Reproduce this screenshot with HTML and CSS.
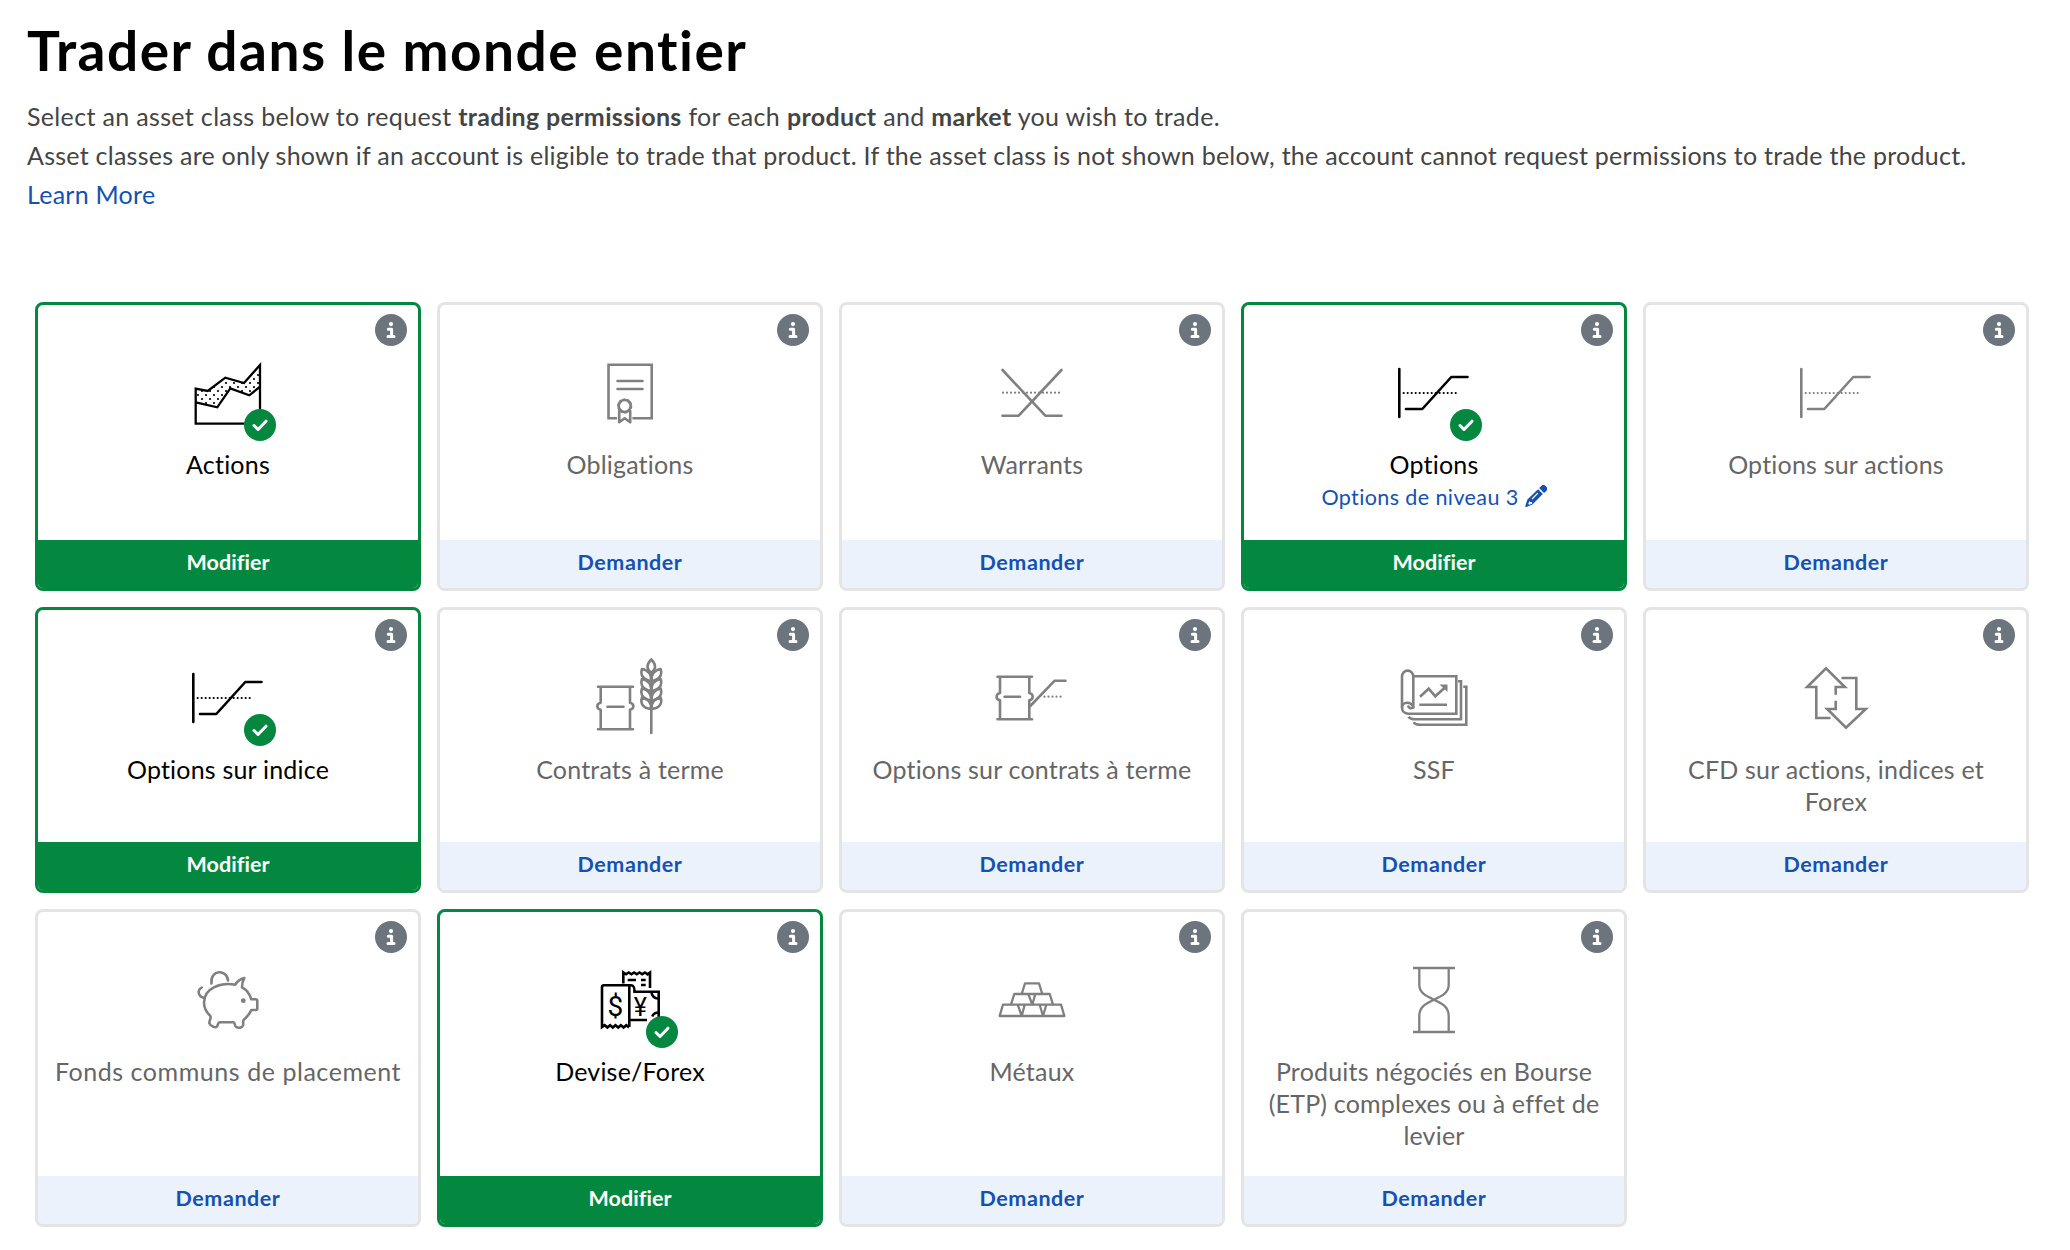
FILE: index.html
```
<!DOCTYPE html>
<html lang="fr">
<head>
  <meta charset="UTF-8">
  <title>Trader dans le monde entier</title>
  <link rel="stylesheet" href="styles.css">
</head>
<body>
  <!-- Icônes partagées -->
  <svg class="sprite" width="0" height="0">
    <symbol id="info" viewBox="0 0 32 32">
      <circle cx="16" cy="16" r="16" fill="#6c757d"/>
      <circle cx="16" cy="10.1" r="2.1" fill="#fff"/>
      <path d="M13.3 15.2h3.3v7.3M13 22.5h6" fill="none" stroke="#fff" stroke-width="3" stroke-linecap="round" stroke-linejoin="round"/>
    </symbol>
    <symbol id="check" viewBox="0 0 32 32">
      <circle cx="16" cy="16" r="16" fill="#04883f" stroke="none"/>
      <path d="M10 16.5l4 4 8-8.3" fill="none" stroke="#fff" stroke-width="3" stroke-linecap="round" stroke-linejoin="round"/>
    </symbol>
    <symbol id="pencil" viewBox="0 0 22 22">
      <path fill="currentColor" fill-rule="evenodd" d="M13 4.2L17.8 9 7.4 19.4 1.4 21.9Q0 22.3 .4 20.8L2.4 14.600zM4.300 16l-1 3 .8.8 3-1V17H5zM12.600 7.600L6.600 13.600l.8.8 6-6z"/>
      <path fill="currentColor" d="M14.200 3l2.100-2.100a3 3 0 0 1 4.200 0l.8.8a3 3 0 0 1 0 4.200L19 7.900z"/>
    </symbol>
    <symbol id="stocks" viewBox="0 0 80 80">
      <pattern id="dots" width="8" height="8" patternUnits="userSpaceOnUse">
        <circle cx="2" cy="2" r="1.1" fill="#000" stroke="none"/>
        <circle cx="6" cy="6" r="1.1" fill="#000" stroke="none"/>
      </pattern>
      <path fill="url(#dots)" stroke="none" d="M7.700 35.700l12 2.300 17.600-13.300L56 30l16-18v21.700l-10.700 8.600-19-7-13 19-21.600-5z"/>
      <path stroke-width="2.300" stroke-linecap="butt" stroke-linejoin="miter" d="M7.700 35.700l12 2.300 17.600-13.300L56 30l16-18v58.700H7.700zM7.700 49.300l21.600 5 13-19 19 7L72 33.700"/>
    </symbol>
    <symbol id="bonds" viewBox="0 0 80 80">
      <path stroke-linejoin="miter" d="M26 65.300H18.500V11.700h43.200v53.600H43.500M27.500 28h25M27.500 36h25"/>
      <circle cx="34.700" cy="53" r="6"/>
      <circle cx="34.700" cy="53" r="7" stroke-width="1.200" stroke-dasharray="2.200 2.200"/>
      <path d="M29.200 58v11.300l5.500-4 5.500 4V58"/>
    </symbol>
    <symbol id="warrants" viewBox="0 0 80 80">
      <path d="M10.500 17l42.800 45.700H69.500M69.500 17L26.700 62.700H10.500"/>
      <path class="dotted" d="M11 39.700H70"/>
    </symbol>
    <symbol id="options" viewBox="0 0 80 80">
      <path d="M5.300 16v48M12 56h16.300l29-32H73.500"/>
      <path class="dotted" d="M9.700 40H64.500"/>
    </symbol>
    <symbol id="futures" viewBox="0 0 80 80">
      <path d="M8 28.700H43M8 71.300H43M10.700 28.700v16c-4.500 1-4.500 6 0 7v19.600M40 28.700v16c4.500 1 4.500 6 0 7v19.600M17.500 48.700h16"/>
      <path d="M61.300 14v61"/>
      <path d="M61.300 1.500c-5 5-5 9.500 0 13.500 5-4 5-8.500 0-13.500z"/>
      <path d="M52 11c-2 6 1 11 9.300 12C61.300 17 58 12 52 11zM70.600 11c2 6-1 11-9.300 12 0-6 3.300-11 9.300-12z"/>
      <path d="M52 21c-2 6 1 11 9.300 12C61.300 27 58 22 52 21zM70.600 21c2 6-1 11-9.300 12 0-6 3.300-11 9.300-12z"/>
      <path d="M52 30.500c-2 6 1 11 9.300 12 0-6-3.300-11-9.300-12zM70.600 30.500c2 6-1 11-9.300 12 0-6 3.300-11 9.300-12z"/>
      <path d="M52 39.500c-2 6 1 11 9.300 11.500 0-6-3.300-10.500-9.300-11.500zM70.600 39.500c2 6-1 11-9.300 11.500 0-6 3.300-10.500 9.300-11.500z"/>
    </symbol>
    <symbol id="futures-options" viewBox="0 0 80 80">
      <path d="M5.500 18.700H40M5.500 61.300H40M8 18.700v16.300c-4.500 1-4.500 6.300 0 7.300v19M37.300 18.700v16.300c4.500 1 4.500 6.300 0 7.300v19M12.500 38.700H28"/>
      <path d="M38.300 48L62.700 22.700H73.500"/>
      <path class="dotted" d="M52.500 38.700H69.500"/>
    </symbol>
    <symbol id="ssf" viewBox="0 0 80 80">
      <g stroke-linejoin="miter" stroke-linecap="butt">
        <path d="M19.300 49.500V18.300a5.650 5.650 0 0 0-11.300 0V49.500c0 4 3 6.200 6.500 6.200H62.300V18.300h-43"/>
        <path d="M8 49.500c0-6 9.500-6.500 11.300 0-2.300 1.500-4.800.5-5.300-2"/>
        <path d="M64 23.300h3v38H21c-3 0-5.500-1-6.500-2.500M69.300 28.700h3v38H26.500c-3.500 0-6-1-7-2.500"/>
        <path d="M26 38.700l8.700-8 6.600 7.600L51.500 29M25.300 46.700H53"/>
      </g>
      <path fill="currentColor" stroke="none" d="M45.500 26.500h8v7.500z"/>
    </symbol>
    <symbol id="cfd" viewBox="0 0 80 80">
      <path stroke-linejoin="miter" stroke-linecap="butt" d="M39.700 36.700V29h9.200L30 10.300 11.100 29h9.200v31H34.500M39.700 42.700V51h-8.500L50 69.700 69.800 51h-9.500V20H45.500"/>
    </symbol>
    <symbol id="funds" viewBox="0 0 80 80">
      <path d="M23.500 23.500C22 9 39 9 40 20.500M13.700 27.500c-5 3-3.500 9.500 3 10.500"/>
      <path d="M47.300 24.700C33 22 16 28 16 42.700c0 7 3.500 10.500 6 13 2 2.300-.8 4-.7 7.600C23 67 28 68 29 66.500c1.200-1.800.8-4.200 3-4.200H45.300c2 0 1 4.500 3.200 5 3 1 6 0 6.500-1.800.6-2.500-.5-4.500 1-6 3-2.500 5.500-5 7.300-9.500h4.200c1 0 1.800-.5 1.800-1.500v-7.500c0-1-.8-1.700-1.800-1.700h-4.200C62 34.500 59 30 54 27.300c0-4 .8-6.500 2.300-9.300-4 1-7 3-9 6.700z"/>
      <circle cx="55.300" cy="40.700" r="2.400" fill="currentColor" stroke="none"/>
    </symbol>
    <symbol id="metals" viewBox="0 0 80 80">
      <path stroke-width="2.300" d="M29.700 34L33 23.300H47L50.300 34M19 44.700L22.300 34H57.700L61 44.700M36.300 34l4 10.700 3-10.700M7.600 56L11 44.700H69L72.400 56zM25.700 44.700L29.700 56l3-11.300M47.700 44.700L51 56l3.300-11.300"/>
    </symbol>
    <symbol id="etp" viewBox="0 0 80 80">
      <path stroke-width="2.300" stroke-linecap="butt" d="M19 8H61M19 72H61M25.300 8V25C25.300 41 54.700 38 54.700 55.500V72M54.700 8V25C54.700 41 25.300 38 25.300 55.500V72"/>
    </symbol>
  </svg>

  <h1>Trader dans le monde entier</h1>
  <div class="intro">
    <p class="lead">Select an asset class below to request <b>trading permissions</b> for each <b>product</b> and <b>market</b> you wish to trade.</p>
    <p>Asset classes are only shown if an account is eligible to trade that product. If the asset class is not shown below, the account cannot request permissions to trade the product.</p>
    <a class="learn-more">Learn More</a>
  </div>

  <div class="grid">
    <div class="card active">
      <svg class="info"><use href="#info"/></svg>
      <div class="content">
        <div class="icon"><svg><use href="#stocks"/></svg><svg class="check"><use href="#check"/></svg></div>
        <div class="name">Actions</div>
      </div>
      <div class="action">Modifier</div>
    </div>
    <div class="card">
      <svg class="info"><use href="#info"/></svg>
      <div class="content">
        <div class="icon"><svg><use href="#bonds"/></svg></div>
        <div class="name">Obligations</div>
      </div>
      <div class="action">Demander</div>
    </div>
    <div class="card">
      <svg class="info"><use href="#info"/></svg>
      <div class="content">
        <div class="icon"><svg><use href="#warrants"/></svg></div>
        <div class="name">Warrants</div>
      </div>
      <div class="action">Demander</div>
    </div>
    <div class="card active">
      <svg class="info"><use href="#info"/></svg>
      <div class="content">
        <div class="icon"><svg><use href="#options"/></svg><svg class="check"><use href="#check"/></svg></div>
        <div class="name">Options</div>
        <div class="level">Options de niveau 3 <svg class="pencil"><use href="#pencil"/></svg></div>
      </div>
      <div class="action">Modifier</div>
    </div>
    <div class="card">
      <svg class="info"><use href="#info"/></svg>
      <div class="content">
        <div class="icon"><svg><use href="#options"/></svg></div>
        <div class="name">Options sur actions</div>
      </div>
      <div class="action">Demander</div>
    </div>

    <div class="card active">
      <svg class="info"><use href="#info"/></svg>
      <div class="content">
        <div class="icon"><svg><use href="#options"/></svg><svg class="check"><use href="#check"/></svg></div>
        <div class="name">Options sur indice</div>
      </div>
      <div class="action">Modifier</div>
    </div>
    <div class="card">
      <svg class="info"><use href="#info"/></svg>
      <div class="content">
        <div class="icon"><svg><use href="#futures"/></svg></div>
        <div class="name">Contrats à terme</div>
      </div>
      <div class="action">Demander</div>
    </div>
    <div class="card">
      <svg class="info"><use href="#info"/></svg>
      <div class="content">
        <div class="icon"><svg><use href="#futures-options"/></svg></div>
        <div class="name">Options sur contrats à terme</div>
      </div>
      <div class="action">Demander</div>
    </div>
    <div class="card">
      <svg class="info"><use href="#info"/></svg>
      <div class="content">
        <div class="icon"><svg><use href="#ssf"/></svg></div>
        <div class="name">SSF</div>
      </div>
      <div class="action">Demander</div>
    </div>
    <div class="card">
      <svg class="info"><use href="#info"/></svg>
      <div class="content">
        <div class="icon"><svg><use href="#cfd"/></svg></div>
        <div class="name">CFD sur actions, indices et<br>Forex</div>
      </div>
      <div class="action">Demander</div>
    </div>

    <div class="card">
      <svg class="info"><use href="#info"/></svg>
      <div class="content">
        <div class="icon"><svg><use href="#funds"/></svg></div>
        <div class="name wide">Fonds communs de placement</div>
      </div>
      <div class="action">Demander</div>
    </div>
    <div class="card active">
      <svg class="info"><use href="#info"/></svg>
      <div class="content">
        <div class="icon">
          <svg viewBox="0 0 80 80">
            <g stroke-linejoin="miter" stroke-linecap="butt">
              <path d="M33.300 23.500V12.500l2.700 1.800 2.700-1.800 2.700 1.800 2.700-1.800 2.700 1.800 2.700-1.800 2.700 1.800 2.700-1.800 2.700 1.800 2.400-1.800V28M37.700 20H46M51 20h4.700M51 25h4.700"/>
              <path d="M41 25.300c3 0 3.500 2 3.500 6.400H68.700V57M39.300 60H57M61.300 31.700c.5 4.500 3 6.800 7.400 7M68.700 52.500c-3 0-5.500 1.500-6.500 4"/>
              <path d="M39.300 67V28c0-1.500.5-2.700 1.700-2.700H14c-1.300 0-2 .8-2 2V67l2.700-1.800 2.700 2.300 2.700-2.300 2.700 2.300 2.700-2.300 2.700 2.300 2.700-2.300 2.700 2.300 2.700-2.300 2.700 2.300"/>
            </g>
            <text class="currency" x="25.300" y="56" font-size="28">$</text>
            <text class="currency" x="50.200" y="56" font-size="25">¥</text>
          </svg>
          <svg class="check"><use href="#check"/></svg>
        </div>
        <div class="name">Devise/Forex</div>
      </div>
      <div class="action">Modifier</div>
    </div>
    <div class="card">
      <svg class="info"><use href="#info"/></svg>
      <div class="content">
        <div class="icon"><svg><use href="#metals"/></svg></div>
        <div class="name">Métaux</div>
      </div>
      <div class="action">Demander</div>
    </div>
    <div class="card">
      <svg class="info"><use href="#info"/></svg>
      <div class="content">
        <div class="icon"><svg><use href="#etp"/></svg></div>
        <div class="name">Produits négociés en Bourse<br>(ETP) complexes ou à effet de<br>levier</div>
      </div>
      <div class="action">Demander</div>
    </div>
  </div>
</body>
</html>
```
FILE: styles.css
```
* {
  box-sizing: border-box;
}
body {
  margin: 0;
  padding: 14px 27px 0;
  background-color: #fff;
  font-family: Lato, "Open Sans", sans-serif;
  font-variant-ligatures: none;
  color: #000;
}
.sprite {
  position: absolute;
}
h1 {
  margin: 0;
  font-size: 55px;
  font-weight: 700;
  line-height: 72px;
  letter-spacing: 1.5px;
  white-space: nowrap;
}
.intro {
  margin-top: 11px;
  font-size: 25px;
  line-height: 39px;
  letter-spacing: 0.255px;
  color: #444;
  white-space: nowrap;
}
.intro p {
  margin: 0;
}
.intro .lead {
  letter-spacing: 0.34px;
}
.intro b {
  font-weight: 700;
}
.learn-more {
  display: block;
  color: #1351b4;
}
.grid {
  display: grid;
  grid-template-columns: repeat(5, 386px);
  gap: 16px;
  margin: 88px 0 0 8px;
}
.card {
  position: relative;
  display: flex;
  flex-direction: column;
  border: 3px solid #e4e4e4;
  border-radius: 8px;
  overflow: hidden;
  color: #666;
}
.info {
  position: absolute;
  top: 9px;
  right: 11.5px;
  width: 32px;
  height: 32px;
}
.content {
  flex: 1;
  display: flex;
  flex-direction: column;
  align-items: center;
  padding: 48px 0 25px;
  text-align: center;
}
.icon {
  position: relative;
  width: 80px;
  height: 80px;
  margin-bottom: 15px;
  color: #808080;
}
.icon svg {
  display: block;
  width: 80px;
  height: 80px;
  fill: none;
  stroke: currentColor;
  stroke-width: 2.6;
  stroke-linecap: round;
  stroke-linejoin: round;
}
.dotted {
  stroke-width: 2.2;
  stroke-dasharray: 0 4;
}
.currency {
  fill: currentColor;
  stroke: none;
  font-family: Roboto, sans-serif;
  text-anchor: middle;
}
.icon .check {
  position: absolute;
  left: 56px;
  top: 56px;
  width: 32px;
  height: 32px;
}
.name {
  font-size: 25px;
  line-height: 32px;
  letter-spacing: 0.2px;
  white-space: nowrap;
}
.wide {
  letter-spacing: 0.55px;
}
.level {
  display: flex;
  align-items: center;
  gap: 6px;
  height: 35px;
  padding-bottom: 1px;
  font-size: 21.5px;
  letter-spacing: 0.4px;
  color: #1351b4;
}
.pencil {
  width: 22px;
  height: 22px;
  margin-bottom: 2px;
}
.action {
  height: 48px;
  line-height: 45px;
  background-color: #ebf2fb;
  color: #1351b4;
  font-size: 21.5px;
  font-weight: 700;
  letter-spacing: 0.55px;
  text-align: center;
}
.active {
  border-color: #04883f;
  color: #000;
}
.active .icon {
  color: #000;
}
.active .action {
  background-color: #04883f;
  color: #fff;
  letter-spacing: 0.05px;
}
```
